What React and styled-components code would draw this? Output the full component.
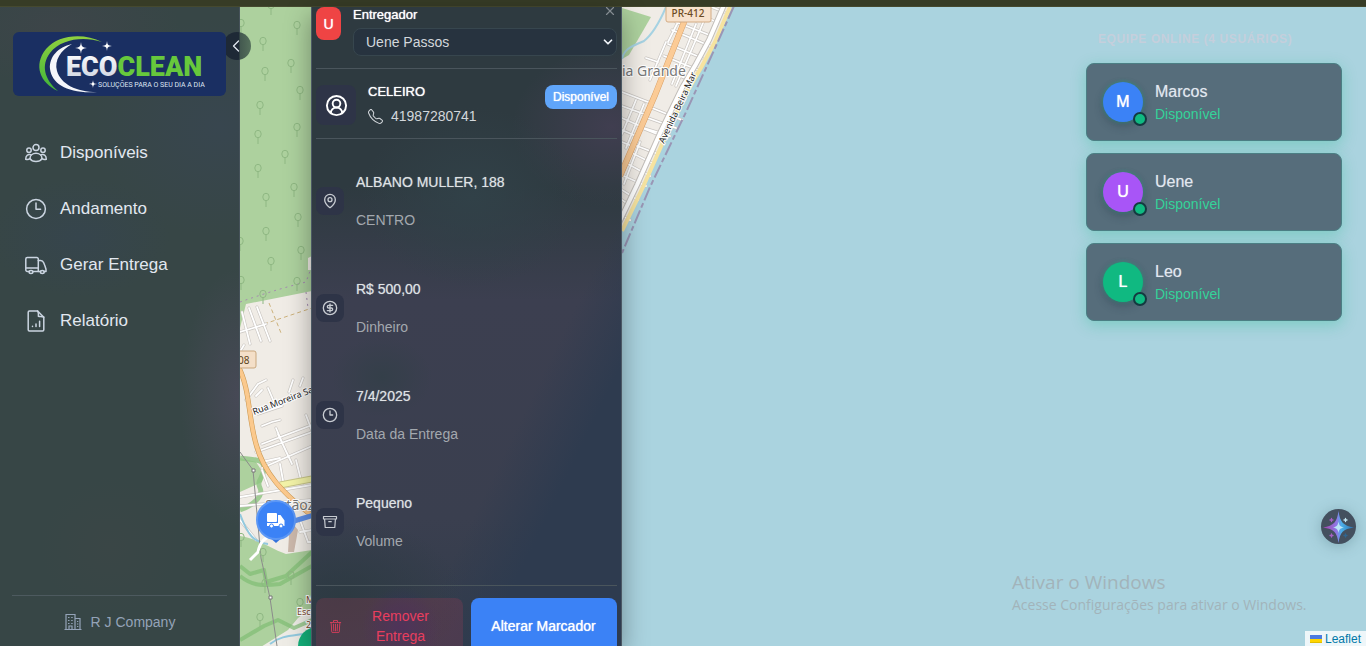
import React from "react";
import styled, { createGlobalStyle } from "styled-components";
import { ChevronLeft, ChevronDown, X, MapPin, CircleDollarSign, CircleUserRound, Clock3 } from "lucide-react";
import { BsTelephone, BsTrash3 } from "react-icons/bs";

const GlobalStyle = createGlobalStyle`
  * { box-sizing: border-box; }
  body {
    margin: 0;
    overflow: hidden;
    font-family: "Liberation Sans", Arial, sans-serif;
    font-size: 14px;
    line-height: 20px;
    color: #e2e8f0;
  }
  button, select { font: inherit; color: inherit; }
  h1, h2, h3, p, ul { margin: 0; padding: 0; }
  ul { list-style: none; }
`;

/* ---------- page frame ---------- */

const Page = styled.div`
  display: flex;
  flex-direction: column;
  height: 100vh;
`;

const TopStrip = styled.div`
  flex: none;
  height: 7px;
  background: #373c26;
  border-bottom: 1px solid #45492f;
`;

const Stage = styled.div`
  position: relative;
  display: flex;
  flex: 1;
  min-height: 0;
  background: #aad3df;
`;

const MapLayer = styled.svg`
  position: absolute;
  inset: 0;
  width: 100%;
  height: 100%;
`;

/* ---------- sidebar ---------- */

const Sidebar = styled.aside`
  position: relative;
  flex: none;
  display: flex;
  flex-direction: column;
  width: 240px;
  padding: 25px 12px 14px;
  border-right: 1px solid #46525a;
  background:
    radial-gradient(ellipse 60px 130px at 240px 390px, #474956, transparent),
    radial-gradient(ellipse 120px 60px at 60px 20px, #3d4549, transparent),
    radial-gradient(ellipse 130px 110px at 220px 120px, #38464f, transparent),
    radial-gradient(ellipse 90px 60px at 80px 230px, #36454d, transparent),
    radial-gradient(ellipse 70px 70px at 110px 540px, #3a4646, transparent),
    #374646;
`;

const Brand = styled.div`
  position: relative;
  z-index: 1;
  height: 64px;
  margin: 0 1px;
  border-radius: 6px;
  background: #1a2f62;
  overflow: hidden;
  svg { display: block; margin: 0 auto; }
`;

const CollapseButton = styled.button`
  position: absolute;
  top: 25px;
  right: -12px;
  width: 28px;
  height: 28px;
  padding: 0 2px 0 0;
  border: 0;
  border-radius: 14px;
  display: flex;
  align-items: center;
  justify-content: center;
  background: linear-gradient(90deg, #1e2936 16px, #43584f 17px, #55705c);
  color: #e2e8f0;
`;

const Nav = styled.nav`
  flex: 1;
  padding-top: 33px;
  ul { display: flex; flex-direction: column; gap: 8px; }
`;

const NavLink = styled.a`
  display: flex;
  align-items: center;
  gap: 12px;
  height: 48px;
  padding: 0 12px;
  font-size: 17px;
  line-height: 24px;
  color: #e2e8f0;
  text-decoration: none;
  svg { color: #cbd5e1; }
`;

const Company = styled.footer`
  display: flex;
  align-items: center;
  justify-content: center;
  gap: 9px;
  padding-top: 16px;
  border-top: 1px solid #4d5a5f;
  color: #94a3b8;
`;

/* ---------- delivery panel ---------- */

const Panel = styled.section`
  position: relative;
  flex: none;
  width: 311px;
  margin-left: 71px;
  padding: 0 4px 8px;
  overflow: hidden;
  border: 1px solid #4b5864;
  border-width: 0 1px;
  box-shadow: 0 8px 24px rgba(0, 0, 0, 0.35);
  background:
    radial-gradient(ellipse 40px 40px at 90px 620px, #33325a, transparent),
    radial-gradient(ellipse 120px 80px at 30px 590px, #2d3a42, transparent),
    radial-gradient(ellipse 50px 40px at 70px 370px, #343f49, transparent),
    radial-gradient(ellipse 110px 90px at 160px 190px, #314148, transparent),
    radial-gradient(ellipse 100px 80px at 300px 120px, #403e50, transparent),
    linear-gradient(116deg, transparent 66%, #2e3b4f 78%),
    linear-gradient(180deg, #2e3a40 28%, #3c3f50 46%, #3a3f4f 80%, #323c4b);
`;

const CourierRow = styled.div`
  display: flex;
  gap: 12px;
  padding-bottom: 12px;
  border-bottom: 1px solid #4a555c;
`;

const CourierTag = styled.span`
  display: flex;
  align-items: center;
  justify-content: center;
  flex: none;
  width: 25px;
  height: 33px;
  border-radius: 8px;
  background: #ef4444;
  color: #fff;
  font-size: 14px;
  text-shadow: 0 0 1px #fff;
`;

const CourierField = styled.div`
  display: flex;
  flex-direction: column;
  flex: 1;
  gap: 6px;
  label {
    height: 15px;
    line-height: 15px;
    font-size: 13px;
    color: #fff;
    text-shadow: 0 0 1px #fff;
  }
`;

const SelectBox = styled.div`
  position: relative;
  svg {
    position: absolute;
    right: 2px;
    top: 7px;
    pointer-events: none;
    color: #f1f5f9;
  }
`;

const Select = styled.select`
  display: block;
  width: 100%;
  height: 28px;
  padding: 0 24px 0 12px;
  appearance: none;
  border: 1px solid #37464e;
  border-radius: 8px;
  background: #27333f;
  color: #d3d7db;
`;

const CloseButton = styled.button`
  position: absolute;
  top: -3px;
  right: 4px;
  display: flex;
  padding: 0;
  border: 0;
  background: none;
  color: #858b91;
`;

const CustomerRow = styled.div`
  display: flex;
  align-items: flex-start;
  gap: 12px;
  padding: 16px 0 13px;
  border-bottom: 1px solid #4a555c;
`;

const IconTile = styled.span`
  display: flex;
  align-items: center;
  justify-content: center;
  flex: none;
  width: ${(p) => p.$size}px;
  height: ${(p) => p.$size}px;
  border-radius: 8px;
  background: #2e3447;
  color: ${(p) => (p.$bright ? "#fff" : "#c8ccd2")};
`;

const Customer = styled.div`
  flex: 1;
  margin-top: -3px;
  h2 {
    font-size: 13px;
    font-weight: 400;
    line-height: 20px;
    color: #fff;
    text-shadow: 0 0 1px #fff;
  }
  p {
    display: flex;
    align-items: center;
    gap: 8px;
    padding-top: 4px;
    margin-bottom: -1px;
    color: #d3d7db;
  }
`;

const Badge = styled.span`
  height: 24px;
  padding: 0 8px;
  border-radius: 8px;
  background: #60a5fa;
  color: #fff;
  font-size: 12px;
  line-height: 24px;
  text-shadow: 0 0 1px #fff;
`;

const Details = styled.ul`
  display: grid;
  grid-auto-rows: 1fr;
  height: 447px;
  padding: 9px 0 10px;
  border-bottom: 1px solid #4a555c;
`;

const Detail = styled.li`
  display: flex;
  align-items: center;
  gap: 12px;
`;

const DetailText = styled.div`
  display: flex;
  flex-direction: column;
  gap: 18px;
`;

const DetailMain = styled.p`
  color: #dfe2e5;
  text-shadow: 0 0 1px rgba(223, 226, 229, 0.6);
`;

const DetailSub = styled.p`
  color: #a3a8ae;
`;

const Actions = styled.div`
  display: grid;
  grid-template-columns: 147px 1fr;
  gap: 8px;
  padding-top: 12px;
`;

const ActionButton = styled.button`
  display: flex;
  align-items: center;
  justify-content: center;
  height: 56px;
  padding: 0 14px 0 13px;
  border: 0;
  border-radius: 8px;
  line-height: 20px;
  background: ${(p) => (p.$danger ? "rgba(244, 63, 94, 0.15)" : "#3b82f6")};
  color: ${(p) => (p.$danger ? "#e83e5e" : "#fff")};
  text-shadow: ${(p) => (p.$danger ? "none" : "0 0 1px #fff")};
  svg { flex: none; }
  span { flex: ${(p) => (p.$danger ? 1 : "none")}; padding-left: ${(p) => (p.$danger ? "10px" : 0)}; }
`;

/* ---------- team list ---------- */

const Team = styled.section`
  position: relative;
  width: 256px;
  margin-left: auto;
  margin-right: 24px;
  padding-top: 22px;
  h2 {
    padding: 0 12px 14px;
    font-size: 12px;
    font-weight: 700;
    line-height: 20px;
    letter-spacing: 0.05em;
    text-transform: uppercase;
    color: #c5cfdc;
  }
  ul { display: flex; flex-direction: column; gap: 12px; }
`;

const Member = styled.li`
  display: flex;
  align-items: center;
  gap: 12px;
  height: 78px;
  padding: 0 16px;
  border: 1px solid #4b7f84;
  border-radius: 8px;
  background: #566d7b;
  box-shadow: 0 4px 15px rgba(16, 185, 129, 0.3);
`;

const Avatar = styled.span`
  position: relative;
  display: flex;
  align-items: center;
  justify-content: center;
  width: 40px;
  height: 40px;
  border-radius: 50%;
  background: ${(p) => p.$color};
  color: #fff;
  font-size: 16px;
  text-shadow: 0 0 1px #fff;
  box-shadow: 0 0 4px rgba(16, 185, 129, 0.5), 0 4px 10px rgba(30, 41, 59, 0.3);
`;

const StatusDot = styled.span`
  position: absolute;
  right: -4px;
  bottom: -4px;
  width: 14px;
  height: 14px;
  border: 2px solid #143a40;
  border-radius: 50%;
  background: #10b981;
`;

const MemberText = styled.div`
  padding-top: 1px;
  h3 {
    font-size: 16px;
    font-weight: 400;
    line-height: 24px;
    color: #e2e8f0;
    text-shadow: 0 0 1px rgba(226, 232, 240, 0.5);
  }
  p { line-height: 21px; color: #34d399; }
`;

/* ---------- overlays on the map ---------- */

const AssistantButton = styled.button`
  position: absolute;
  right: 10px;
  bottom: 102px;
  width: 35px;
  height: 35px;
  padding: 0;
  border: 0;
  border-radius: 50%;
  background: #44505f;
  box-shadow: 0 2px 14px rgba(60, 100, 110, 0.35);
  svg { display: block; }
`;

const Watermark = styled.div`
  position: absolute;
  right: 54px;
  bottom: 31px;
  width: 300px;
  font-family: "Open Sans", "Noto Sans", sans-serif;
  font-size: 14px;
  line-height: 20px;
  white-space: nowrap;
  color: #a2b3ba;
  pointer-events: none;
  strong {
    display: block;
    font-size: 19px;
    font-weight: 400;
    line-height: 26px;
  }
`;

const Attribution = styled.div`
  position: absolute;
  right: 0;
  bottom: 0;
  height: 15px;
  padding: 0 5px;
  background: rgba(255, 255, 255, 0.8);
  font-size: 12px;
  line-height: 16px;
  a {
    display: flex;
    align-items: center;
    gap: 3px;
    color: #0078a8;
    text-decoration: none;
  }
`;

/* ---------- drawings ---------- */

const NavSvg = ({ children }) => (
  <svg width="24" height="24" viewBox="0 0 24 24" fill="none" stroke="currentColor" strokeWidth="1.5" strokeLinecap="round" strokeLinejoin="round" aria-hidden="true">
    {children}
  </svg>
);

const UsersIcon = () => (
  <NavSvg>
    <circle cx="12" cy="6.6" r="3" />
    <circle cx="5" cy="9.3" r="2.2" />
    <circle cx="19" cy="9.3" r="2.2" />
    <path d="M6 17.6c0-3.2 2.5-5.4 6-5.4s6 2.2 6 5.4c-1.2 2-3.5 2.9-6 2.9s-4.800-.900-6-2.900z" />
    <path d="M7 13.800c-2.700-1-5.300.5-5.300 4.400 1.200.4 2.800.6 4.300-.6M17 13.800c2.700-1 5.300.5 5.300 4.400-1.200.4-2.800.6-4.300-.6" />
  </NavSvg>
);

const HourIcon = () => (
  <NavSvg>
    <circle cx="12" cy="12" r="9.4" />
    <path d="M12 6v6.200h4.600" />
  </NavSvg>
);

const TruckIcon = () => (
  <NavSvg>
    <path d="M5.200 18.500H3.300a1.500 1.500 0 0 1-1.500-1.500V6a1.500 1.500 0 0 1 1.500-1.500h9.500A1.500 1.500 0 0 1 14.300 6v12.500H8.800M1.800 15h12.500" />
    <path d="M14.300 7.500h2.400c1.500 0 2.400.8 3 2.200 1 2.300 1.700 4.300 2.300 6.500v2.300h-1.900M16.500 18.500h-2.200" />
    <ellipse cx="7" cy="18.900" rx="1.900" ry="1.500" />
    <ellipse cx="18.300" cy="18.900" rx="1.900" ry="1.500" />
  </NavSvg>
);

const ReportIcon = () => (
  <NavSvg>
    <path d="M4.200 3.200A1.200 1.200 0 0 1 5.400 2h8.200l6.200 6.200v12.600a1.200 1.200 0 0 1-1.200 1.200H5.400a1.200 1.200 0 0 1-1.200-1.200z" />
    <path d="M13.600 2c1.300 2 .8 3.600.8 5.200 1.600.6 3.600-.2 5.400 1" />
    <path d="M8.500 17.300v.2M12 15v2.500M15.600 12.300v5.200" />
  </NavSvg>
);

const OfficeIcon = () => (
  <svg width="18" height="18" viewBox="0 0 18 18" fill="none" stroke="currentColor" strokeWidth="1.2" aria-hidden="true">
    <path d="M.5 16.500h17M2 16.500V1.500h9v15M11 5.500h5v11M5 16.500v-3.500h3v3.500" />
    <path d="M4 4.500h1.500M7.200 4.500h1.500M4 7.500h1.500M7.200 7.500h1.500M4 10.500h1.500M7.200 10.500h1.500M13 8.500h1.300M13 11h1.300M13 13.500h1.300" />
  </svg>
);

const BoxIcon = () => (
  <svg width="16" height="16" viewBox="0 0 16 16" fill="none" stroke="currentColor" strokeWidth="1.2" strokeLinejoin="round" aria-hidden="true">
    <path d="M1.500 2.500h13v2.500h-13zM2.600 5l.6 8.500h9.600l.6-8.500M6.300 7.700h3.400" />
  </svg>
);

const Spark = ({ x, y, r }) => (
  <path
    transform={`translate(${x} ${y}) scale(${r})`}
    d="M0-1C.1-.2.2-.1 1 0 .2.1.1.2 0 1-.1.2-.2.1-1 0-.2-.1-.1-.2 0-1z"
    fill="#fff"
  />
);

const Logo = () => (
  <svg width="213" height="64" viewBox="0 0 213 64" role="img" aria-label="Ecoclean">
    <defs>
      <linearGradient id="leaf" x1="0" y1="0" x2="0" y2="1">
        <stop offset="0" stopColor="#8fd13f" />
        <stop offset="1" stopColor="#3fb33a" />
      </linearGradient>
      <linearGradient id="steel" x1="0" y1="0" x2="0" y2="1">
        <stop offset="0" stopColor="#fff" />
        <stop offset="1" stopColor="#c9d0de" />
      </linearGradient>
    </defs>
    <path d="M89 10C71 1 46 2 33 17c-13 16-6 34 12 42-14-12-17-26-8-38C48 7 70 4 89 10z" fill="url(#leaf)" />
    <path d="M59 12C45 15 36 25 37 37c2 15 18 25 47 23-21 0-36-8-40-21-3-11 4-21 15-27z" fill="#f4f6fa" />
    <Spark x={68} y={16} r={6} />
    <Spark x={94} y={14} r={5} />
    <Spark x={80} y={52} r={4} />
    <text x="53" y="44" fontFamily="Roboto, sans-serif" fontWeight="900" fontSize="27" fill="url(#steel)">
      ECO<tspan fill="#67c83c">CLEAN</tspan>
    </text>
    <text x="85" y="55" fontFamily="Roboto, sans-serif" fontSize="7" fill="#dfe5f2">
      SOLUÇÕES PARA O SEU DIA A DIA
    </text>
  </svg>
);

const AssistantMark = () => (
  <svg width="35" height="35" viewBox="0 0 35 35" aria-hidden="true">
    <defs>
      <linearGradient id="prism" x1="0" y1="0" x2="1" y2="0">
        <stop offset="0.1" stopColor="#a04fb8" />
        <stop offset="0.45" stopColor="#8f7ae6" />
        <stop offset="0.6" stopColor="#4bb0ea" />
        <stop offset="1" stopColor="#2b6fae" />
      </linearGradient>
    </defs>
    <path d="M17.500 2C19 13 22 16.500 33 18.500 22 20 19 23 17.500 34 16 23 13 20 2 18.500 13 16.500 16 13 17.500 2z" fill="url(#prism)" />
    <path d="M17.500 12.500c.6 4 1.800 5.200 5.500 6-3.700.7-4.900 1.900-5.500 5.500-.6-3.600-1.800-4.800-5.500-5.500 3.700-.8 4.900-2 5.500-6z" fill="#b9e6f8" />
    <g strokeWidth="1.300" strokeLinecap="round">
      <path d="M10.500 9.500v3M9 11h3M10.500 25v3M9 26.500h3" stroke="#a65fc4" />
      <path d="M24.500 9.500v3M23 11h3" stroke="#c5e9f5" />
      <path d="M24.500 25v3M23 26.500h3" stroke="#2f6590" />
    </g>
  </svg>
);

const Flag = () => (
  <svg width="12" height="8" viewBox="0 0 12 8" aria-hidden="true">
    <path fill="#4c7be1" d="M0 0h12v4H0z" />
    <path fill="#ffd500" d="M0 4h12v3H0z" />
    <path fill="#e0bc00" d="M0 7h12v1H0z" />
  </svg>
);

const TREES = [
  [271, 5], [241, 23], [297, 25], [263, 41], [291, 63], [265, 71], [300, 90], [260, 105], [297, 127], [258, 134],
  [285, 154], [258, 168], [294, 187], [266, 197], [298, 217], [266, 231], [240, 241], [301, 250], [271, 261], [241, 280],
  [297, 281], [263, 294], [241, 537], [263, 552], [291, 575], [265, 583], [300, 602], [260, 617],
];

const Streets = ({ d }) => (
  <g fill="none" strokeLinecap="round">
    <path d={d} stroke="#c9c5c0" strokeWidth="3" />
    <path d={d} stroke="#fff" strokeWidth="1.800" />
  </g>
);

const WEST_STREETS =
  "M240 332l26-8M249 308l12 33M257 307l13 34M242 312l8 32M241 350l3-5M262 444l50-19M256 452l56-20M262 468l50-22M278 434l14 30M262 462l18-4M306 415l6 16M276 428l6 14M246 400l12-16 8-4M256 396l6-6M289 392l4-12M300 386l3-8M268 388l6 14M240 497l72-12M240 506l70-6M262 470l6 16M280 464l4 22M296 460l6 24M240 520l16 20M300 520l8 22 4 0M312 530l-12 2M262 426l10-4 8-2M258 414l24-8";

const EAST_STREETS =
  "M622 92l26 10M622 106l22 8M622 118l18 8M622 130l14 6M622 142l10 4M666 42l-16 38M658 62l-12-4M672 30l38 16M676 22l36 14M668 44l34 14M664 56l34 14M660 68l30 12M696 24l-24 60M706 16l-30 70M682 14l-14 28M652 108l30 12M648 118l28 10M644 128l26 8M632 144l26 10M630 152l24 12M628 164l22 12M624 176l22 10M622 190l16 10M640 142l-16 42M652 150l-22 50M628 204l-6-4M662 136l-20-8M636 100l-14 34M644 104l-18 44M622 216l8 4M704 4l20 8M700 14l16 8";

const COAST = "M730 7L715 42 702 66 688 90 667 133 643 187 622 231";

const LandMap = () => (
  <MapLayer aria-hidden="true" fontFamily="'Noto Sans', sans-serif">
    <defs>
      <clipPath id="west"><path d="M240 0h72v1200h-72z" /></clipPath>
      <clipPath id="east"><path d="M622 0h200v600h-200z" /></clipPath>
    </defs>
    <g transform="translate(0 -7)">
      <g clipPath="url(#west)">
        <path d="M240 0h72v1200h-72z" fill="#f0ece6" />
        <path d="M240 0h72v291l-66 13-6 24z" fill="#add19e" />
        <path d="M308 258l4-2v14h-4z" fill="#f0ece6" />
        <path d="M240 302c20-7 42-14 66-20l6-16M306 292l2 16" fill="none" stroke="#a58bb0" strokeWidth="1" strokeDasharray="2 4" />
        <path d="M269 303l12 30M264 324l48-16" fill="none" stroke="#cdb27c" strokeWidth="1" strokeDasharray="4 3" />
        <path d="M240 458l16 4 8 12-2 8-22 10z" fill="#add19e" />
        <path d="M240 458c12 2 24 0 24 10s-8 12-4 20-8 18-20 22" fill="none" stroke="#8cc47f" strokeWidth="5" opacity=".8" />
        <path d="M240 536c16 2 30 12 46 18l26-4v96h-72z" fill="#add19e" />
        <path d="M288 630l10-12 14-10v60h-70l14-18z" fill="#eeece6" />
        <path d="M290 520l8 10-4 22h-6z" fill="#cbb8ab" />
        <Streets d={WEST_STREETS} />
        <path d="M240 514c8 22 14 28 28 30M270 644c10-8 20-8 34-10" fill="none" stroke="#92c9de" strokeWidth="2" />
        <path d="M240 566l10 8 14-4 2 12 20-6 26-24M240 576c12 10 22 10 40 8l32-18M240 640l24-14 14-6 16 8 18-8" fill="none" stroke="#7fbd74" strokeWidth="4" strokeLinejoin="round" opacity=".7" />
        <path d="M240 452l13 18 8 88 9 40 7 48" fill="none" stroke="#8b8b8b" strokeWidth="1" />
        <g fill="#fff" stroke="#777"><path d="M252 469h3v3h-3zM269 596h3v3h-3z" /></g>
        <path d="M280 485l32-6" stroke="#c9c788" strokeWidth="7" />
        <path d="M280 485l32-6" stroke="#f3f3a8" strokeWidth="5" />
        <path d="M238 366c12 22 10 50 18 78 8 30 28 50 54 70" fill="none" stroke="#c9964f" strokeWidth="5" />
        <path d="M238 366c12 22 10 50 18 78 8 30 28 50 54 70" fill="none" stroke="#fbc98d" strokeWidth="4" />
        <path d="M274 534c-10 4-14 8-16 18l-8 8" fill="none" stroke="#fff" strokeWidth="3" />
        <path d="M294 521l20-6" stroke="#5c8fe8" strokeWidth="5" />
        <g fill="none" stroke="#8fb883" strokeWidth="1">
          {TREES.map(([x, y]) => (
            <path key={`${x}-${y}`} d={`M${x} ${y + 4}v6M${x - 3.2} ${y}a3.200 3.700 0 1 1 6.400 0a3.200 3.700 0 1 1-6.400 0`} />
          ))}
        </g>
        <rect x="226" y="351" width="30" height="17" rx="2" fill="#f4dfc8" stroke="#c9a77e" />
        <text x="238" y="364" fontSize="10" fill="#5c4320">08</text>
        <g stroke="#fff" strokeWidth="2" paintOrder="stroke">
          <text transform="translate(254 415) rotate(-21)" fontSize="9" fill="#222">Rua Moreira Sa</text>
          <text x="265" y="510" fontSize="14" fill="#777">Sertãoz</text>
          <g fontSize="9" fill="#7c4a2c"><text x="306" y="603">M</text><text x="297" y="615">Esc</text><text x="306" y="628">2</text></g>
        </g>
        <circle cx="317" cy="646" r="19" fill="#14b07a" />
      </g>
      <g clipPath="url(#east)">
        <path d="M622 0h111L715 42 702 66 688 90 667 133 643 187 622 231z" fill="#f0ece6" />
        <path d="M622 8l29 9-22 38-7 4z" fill="#add19e" />
        <path d="M666 7c-6 14-12 26-22 34-14 6-20 8-22 18" fill="none" stroke="#a6d2e2" strokeWidth="2" />
        <Streets d={EAST_STREETS} />
        <path d="M690 7L655 95 620 176" fill="none" stroke="#d9a066" strokeWidth="6" />
        <path d="M690 7L655 95 620 176" fill="none" stroke="#fbcb96" strokeWidth="5" />
        <path d={COAST} fill="none" stroke="#f6e3a0" strokeWidth="4" />
        <path d={COAST} transform="translate(-6 -2)" fill="none" stroke="#c3bfba" strokeWidth="6" />
        <path d={COAST} transform="translate(-6 -2)" fill="none" stroke="#fff" strokeWidth="4" />
        <path d="M734 6L687 110 650 187 622 253" fill="none" stroke="#9a96b5" strokeWidth="2" strokeDasharray="14 3 5 3" />
        <rect x="666" y="4" width="45" height="18" rx="2" fill="#f7e2cd" stroke="#d3ac84" />
        <text x="688" y="17" fontSize="10" fontWeight="500" textAnchor="middle" fill="#6b4a22">PR-412</text>
        <g stroke="#fff" strokeWidth="2" paintOrder="stroke">
          <text x="622" y="76" fontSize="14" fill="#777">ia Grande</text>
          <text transform="translate(664 144) rotate(-65)" fontSize="9" fill="#222">Avenida Beira Mar</text>
        </g>
      </g>
      <path d="M268 536l8 7 8-7z" fill="#3573dc" />
      <circle cx="276" cy="520" r="19" fill="#3b82f6" stroke="#5c97f5" strokeWidth="2" />
      <g fill="#fff">
        <rect x="267" y="513" width="10" height="9" rx="1" />
        <path d="M267 523h11v-8h2.500l4 5.500V526H267z" />
      </g>
      <g fill="#fff" stroke="#3b82f6"><circle cx="271.500" cy="526" r="2" /><circle cx="281" cy="526" r="2" /></g>
    </g>
  </MapLayer>
);

/* ---------- data ---------- */

const NAV = [
  { label: "Disponíveis", Icon: UsersIcon },
  { label: "Andamento", Icon: HourIcon },
  { label: "Gerar Entrega", Icon: TruckIcon },
  { label: "Relatório", Icon: ReportIcon },
];

const DETAILS = [
  { main: "ALBANO MULLER, 188", sub: "CENTRO", Icon: MapPin },
  { main: "R$ 500,00", sub: "Dinheiro", Icon: CircleDollarSign },
  { main: "7/4/2025", sub: "Data da Entrega", Icon: Clock3 },
  { main: "Pequeno", sub: "Volume", Icon: BoxIcon },
];

const TEAM = [
  { name: "Marcos", color: "#3b82f6" },
  { name: "Uene", color: "#a855f7" },
  { name: "Leo", color: "#10b981" },
];

export default function App() {
  return (
    <Page>
      <GlobalStyle />
      <TopStrip />
      <Stage>
        <LandMap />

        <Sidebar>
          <Brand><Logo /></Brand>
          <CollapseButton aria-label="Recolher menu"><ChevronLeft size={20} strokeWidth={1.5} /></CollapseButton>
          <Nav>
            <ul>
              {NAV.map(({ label, Icon }) => (
                <li key={label}><NavLink href="#"><Icon />{label}</NavLink></li>
              ))}
            </ul>
          </Nav>
          <Company><OfficeIcon />R J Company</Company>
        </Sidebar>

        <Panel>
          <CourierRow>
            <CourierTag>U</CourierTag>
            <CourierField>
              <label htmlFor="courier">Entregador</label>
              <SelectBox>
                <Select id="courier" defaultValue="Uene Passos"><option>Uene Passos</option></Select>
                <ChevronDown size={14} strokeWidth={3} />
              </SelectBox>
            </CourierField>
          </CourierRow>
          <CloseButton aria-label="Fechar"><X size={14} strokeWidth={2} /></CloseButton>

          <CustomerRow>
            <IconTile $size={40} $bright><CircleUserRound size={23} strokeWidth={2} /></IconTile>
            <Customer>
              <h2>CELEIRO</h2>
              <p><BsTelephone size={15} />41987280741</p>
            </Customer>
            <Badge>Disponível</Badge>
          </CustomerRow>

          <Details>
            {DETAILS.map(({ main, sub, Icon }) => (
              <Detail key={sub}>
                <IconTile $size={28}><Icon size={16} /></IconTile>
                <DetailText>
                  <DetailMain>{main}</DetailMain>
                  <DetailSub>{sub}</DetailSub>
                </DetailText>
              </Detail>
            ))}
          </Details>

          <Actions>
            <ActionButton $danger><BsTrash3 size={13} /><span>Remover Entrega</span></ActionButton>
            <ActionButton><span>Alterar Marcador</span></ActionButton>
          </Actions>
        </Panel>

        <Team>
          <h2>Equipe online (4 usuários)</h2>
          <ul>
            {TEAM.map(({ name, color }) => (
              <Member key={name}>
                <Avatar $color={color}>{name[0]}<StatusDot /></Avatar>
                <MemberText>
                  <h3>{name}</h3>
                  <p>Disponível</p>
                </MemberText>
              </Member>
            ))}
          </ul>
        </Team>

        <Watermark><strong>Ativar o Windows</strong>Acesse Configurações para ativar o Windows.</Watermark>
        <AssistantButton aria-label="Assistente"><AssistantMark /></AssistantButton>
        <Attribution><a href="#"><Flag />Leaflet</a></Attribution>
      </Stage>
    </Page>
  );
}
